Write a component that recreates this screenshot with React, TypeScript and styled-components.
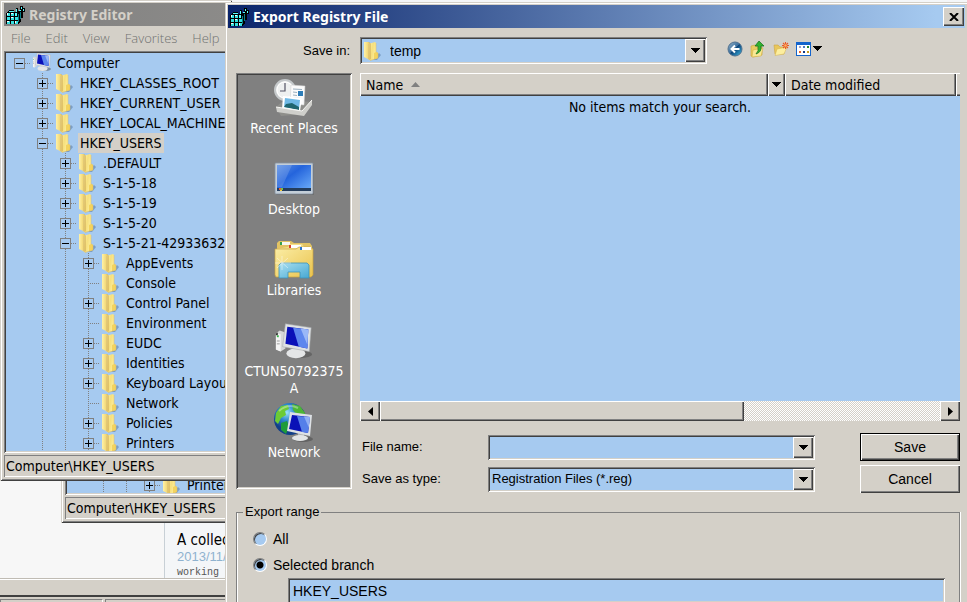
import React from 'react';
import styled, { createGlobalStyle, css } from 'styled-components';

const FACE = '#d4d0c8';
const BLUE = '#a6caf0';
const SHADOW = '#808080';
const DARK = '#404040';
const UI = '"DejaVu Sans Condensed", "Noto Sans", sans-serif';
const ARIAL = '"Liberation Sans", Arial, sans-serif';

const Global = createGlobalStyle`
  * { box-sizing: border-box; }
  body { margin: 0; background: #f7f7f7; color: #000; font: 14px/20px ${UI}; }
  button, input, select { font: inherit; color: inherit; margin: 0; padding: 0; border: 0; border-radius: 0; }
`;

const raised = css`
  background: ${FACE};
  box-shadow: inset 1px 1px #fff, inset -1px -1px ${DARK}, inset -2px -2px ${SHADOW};
`;
const frame = css`
  background: ${FACE};
  box-shadow: inset 1px 1px ${FACE}, inset -1px -1px ${DARK}, inset 2px 2px #fff, inset -2px -2px ${SHADOW};
`;
const sunken = css`
  padding: 2px;
  box-shadow: inset 1px 1px ${SHADOW}, inset -1px -1px #fff, inset 2px 2px ${DARK}, inset -2px -2px ${FACE};
`;

const Screen = styled.div`
  position: relative;
  height: 100vh;
  overflow: hidden;
`;

/* ---------- page behind the windows ---------- */
const Backdrop = styled.div`
  height: 100%;
  display: flex;
  flex-direction: column;
`;
const BackPage = styled.div`
  flex: 1;
  min-height: 0;
  display: flex;
  align-items: flex-end;
`;
const BackArticle = styled.article`
  margin-left: 164px;
  flex: 1;
  height: 100%;
  padding: 530px 0 0 12px;
  overflow: hidden;
  border-left: 1px solid #c8d0d6;
  background: #f4f6f8;
`;
const BackTitle = styled.h2`
  margin: 0;
  font: 15px/20px ${UI};
`;
const BackDate = styled.time`
  display: block;
  font: 13px/14px ${ARIAL};
  color: #8fb2cf;
`;
const BackCode = styled.p`
  margin: 4px 0 0;
  font: 10px/10px "Liberation Mono", monospace;
  color: #555;
`;
const BackBar = styled.div`
  height: 19px;
  background: ${FACE};
  border-top: 1px solid #c0bcb4;
  border-bottom: 2px solid ${DARK};
  box-shadow: inset 0 1px #fff;
`;
const BackStatus = styled.div`
  display: flex;
  gap: 2px;
  height: 5px;
  padding-top: 2px;
  background: ${FACE};
`;
const BackCell = styled.div<{ $grow?: boolean }>`
  flex: ${p => (p.$grow ? '1' : '0 0 103px')};
  border-top: 1px solid ${SHADOW};
  border-left: 1px solid ${SHADOW};
  border-right: 1px solid #fff;
`;

/* ---------- windows ---------- */
const EditorWindow = styled.section`
  position: absolute;
  top: 0;
  left: 0;
  width: 24%;
  padding: 3px 0 4px 4px;
  ${frame}
`;
const LowerWindow = styled.section`
  position: absolute;
  top: 469px;
  left: 61px;
  width: 20%;
  padding: 4px 0 4px 4px;
  ${frame}
`;
const DialogWindow = styled.section`
  position: absolute;
  top: 2px;
  left: 225px;
  right: 0;
  bottom: 0;
  padding: 3px 2px 0 3px;
  overflow: hidden;
  background: ${FACE};
  box-shadow: inset 1px 1px ${FACE}, inset 2px 2px #fff;
`;
const TitleBar = styled.header<{ $active?: boolean }>`
  display: flex;
  align-items: center;
  gap: 3px;
  height: 23px;
  padding: 0 1px 0 2px;
  background: ${p => (p.$active ? `linear-gradient(90deg, #0a246a, ${BLUE} 96%)` : 'linear-gradient(90deg, #808080, #8c8b89)')};
  color: ${p => (p.$active ? '#fff' : FACE)};
`;
const TitleText = styled.h1`
  flex: 1;
  margin: 0;
  white-space: nowrap;
  font: bold 14px/22px "Noto Sans", sans-serif;
`;
const CloseButton = styled.button`
  display: grid;
  place-items: center;
  width: 21px;
  height: 19px;
  ${raised}
`;

const Menu = styled.nav`
  display: flex;
  gap: 15px;
  height: 25px;
  padding-left: 7px;
  font: 300 13px/23px "Open Sans", sans-serif;
`;
const MenuButton = styled.button`
  background: none;
  color: #707070;
`;

const TreePane = styled.div<{ $short?: boolean }>`
  ${sunken}
  height: ${p => (p.$short ? '22px' : '402px')};
  overflow: hidden;
  background: ${BLUE};
`;
const TreeList = styled.ul`
  margin: 0;
  padding: 0 0 0 2px;
  height: 100%;
  overflow: hidden;
  list-style: none;
`;
const TreeRow = styled.li`
  display: flex;
  align-items: center;
  height: 20px;
  white-space: nowrap;
`;
const dotsV = `repeating-linear-gradient(${SHADOW} 0 1px, transparent 1px 2px)`;
const dotsH = `repeating-linear-gradient(90deg, ${SHADOW} 0 1px, transparent 1px 2px)`;
const Guide = styled.span<{ $line?: boolean; $branch?: boolean }>`
  flex: none;
  display: grid;
  place-items: center;
  width: 23px;
  height: 20px;
  background-repeat: no-repeat;
  ${p => p.$line && !p.$branch && css`background-image: ${dotsV}; background-size: 1px 100%; background-position: 11px 0;`}
  ${p => !p.$line && p.$branch && css`background-image: ${dotsH}; background-size: 12px 1px; background-position: 11px 10px;`}
  ${p => p.$line && p.$branch && css`background-image: ${dotsV}, ${dotsH}; background-size: 1px 100%, 12px 1px; background-position: 11px 0, 11px 10px;`}
`;
const Expander = styled.button`
  display: block;
  width: 11px;
  height: 11px;
  border: 1px solid ${SHADOW};
  background: ${BLUE};
  svg { display: block; }
`;
const IconSlot = styled.span`
  flex: none;
  width: 20px;
  height: 20px;
  margin: 0 2px;
  svg { display: block; }
`;
const TreeLabel = styled.span<{ $selected?: boolean }>`
  padding: 0 2px;
  background: ${p => (p.$selected ? FACE : 'transparent')};
`;
const Status = styled.footer`
  height: 22px;
  margin-top: 2px;
  padding: 1px 2px 0;
  box-shadow: inset 1px 1px ${SHADOW}, inset -1px -1px #fff;
`;

/* ---------- dialog ---------- */
const Body = styled.div`
  display: flex;
  flex-direction: column;
  padding: 9px 5px 0 8px;
  font-family: ${ARIAL};
`;
const TopRow = styled.div`
  display: flex;
  align-items: center;
  gap: 8px;
`;
const SaveInLabel = styled.label`
  flex: none;
  width: 116px;
  padding-right: 2px;
  font-size: 13px;
  text-align: right;
`;
const Combo = styled.div<{ $wide?: boolean }>`
  flex: ${p => (p.$wide ? '1' : '0 1 347px')};
  display: flex;
  align-items: center;
  min-width: 0;
  height: ${p => (p.$wide ? '25px' : '27px')};
  ${sunken}
  background: ${BLUE};
`;
const Pick = styled.select<{ $small?: boolean }>`
  flex: 1;
  min-width: 0;
  height: 100%;
  padding-left: ${p => (p.$small ? '2px' : '4px')};
  appearance: none;
  background: transparent;
  outline: 0;
  ${p => p.$small && css`font-size: 13px;`}
`;
const Field = styled.input`
  flex: 1;
  min-width: 0;
  height: 100%;
  padding-left: 3px;
  background: ${BLUE};
  outline: 0;
`;
const Drop = styled.button`
  display: grid;
  place-items: center;
  width: 20px;
  height: 100%;
  ${raised}
`;
const Tools = styled.div`
  display: flex;
  gap: 5px;
  padding: 0 0 4px 12px;
`;
const ToolButton = styled.button`
  display: flex;
  align-items: center;
  height: 20px;
  background: none;
`;
const Main = styled.div`
  display: flex;
  gap: 8px;
  margin-top: 9px;
`;
const Places = styled.nav`
  flex: none;
  width: 116px;
  height: 416px;
  ${sunken}
  background: ${SHADOW};
  font-family: ${UI};
`;
const Place = styled.button`
  display: flex;
  flex-direction: column;
  align-items: center;
  width: 100%;
  height: 81px;
  padding: 3px 6px 0;
  background: none;
  color: #fff;
  line-height: 17px;
  overflow-wrap: anywhere;
  svg { flex: none; margin-bottom: 2px; }
`;
const Right = styled.div`
  flex: 1;
  min-width: 0;
`;
const ListPane = styled.div`
  display: flex;
  flex-direction: column;
  height: 348px;
  background: ${BLUE};
  font-family: ${UI};
`;
const Files = styled.table`
  width: 100%;
  table-layout: fixed;
  border-collapse: collapse;
`;
const Head = styled.th<{ $w?: number }>`
  width: ${p => (p.$w ? `${p.$w}px` : 'auto')};
  height: 23px;
  padding: 0 0 0 6px;
  overflow: hidden;
  text-align: left;
  font-weight: normal;
  ${raised}
  svg { margin-left: 4px; vertical-align: 3px; }
`;
const HeadArrow = styled(Head)`
  padding: 0;
  svg { display: block; margin: 0 auto; }
`;
const HeadEnd = styled(Head)`
  padding: 0;
  box-shadow: inset 1px 1px #fff, inset 0 -1px ${DARK}, inset 0 -2px ${SHADOW};
`;
const EmptyCell = styled.td`
  padding: 1px 0;
  text-align: center;
`;
const Scroll = styled.div`
  display: flex;
  margin-top: auto;
  height: 20px;
  background: repeating-conic-gradient(#fff 0 25%, ${FACE} 0 50%) 0 0 / 2px 2px;
`;
const ScrollButton = styled.button`
  display: grid;
  place-items: center;
  width: 20px;
  ${raised}
`;
const Thumb = styled.div`
  flex: 65;
  ${raised}
`;
const Track = styled.div`
  flex: 35;
`;
const Form = styled.div`
  display: grid;
  grid-template-columns: 120px minmax(0, 327px) 1fr 100px;
  column-gap: 8px;
  row-gap: 4px;
  align-items: center;
  margin-top: 12px;
`;
const FormLabel = styled.label`
  padding-left: 2px;
  font-size: 13px;
`;
const Push = styled.button<{ $default?: boolean }>`
  grid-column: 4;
  height: 28px;
  ${raised}
  ${p => p.$default && css`border: 1px solid #000;`}
`;
const Group = styled.fieldset`
  min-width: 0;
  height: 120px;
  margin: 9px 0 0;
  padding: 4px 14px 0 16px;
  border: 1px solid ${SHADOW};
  box-shadow: inset 1px 0 #fff, 1px 0 #fff;
`;
const Legend = styled.legend`
  margin-left: -10px;
  padding: 0 2px;
  font-size: 13px;
`;
const Option = styled.label`
  display: flex;
  align-items: center;
  gap: 6px;
  height: 26px;
`;
const Radio = styled.input`
  appearance: none;
  width: 14px;
  height: 14px;
  border: 1px solid;
  border-color: ${SHADOW} #fff #fff ${SHADOW};
  border-radius: 50%;
  background: ${BLUE};
  box-shadow: inset 1px 1px ${DARK};
  &:checked { background: radial-gradient(circle, #000 0 3px, ${BLUE} 4px); }
`;
const Branch = styled.div`
  ${sunken}
  display: flex;
  height: 25px;
  margin-left: 35px;
  background: ${BLUE};
`;

/* ---------- icons ---------- */
const Down = () => (
  <svg width="9" height="5" viewBox="0 0 9 5" shapeRendering="crispEdges"><path d="M0 0H9L5 5H4Z" /></svg>
);
const Sort = () => (
  <svg width="9" height="5" viewBox="0 0 9 5"><path d="M4.500 0L9 5H0Z" fill="#808080" /></svg>
);
const Side = ({ right }: { right?: boolean }) => (
  <svg width="5" height="9" viewBox="0 0 5 9"><path d={right ? 'M0 0L5 4.500L0 9Z' : 'M5 0L0 4.500L5 9Z'} /></svg>
);
const Close = () => (
  <svg width="10" height="8" viewBox="0 0 10 8"><path d="M1 0L9 8M9 0L1 8" stroke="#000" strokeWidth="2" /></svg>
);

const RegIcon = () => (
  <svg width="20" height="20" viewBox="0 0 20 20" shapeRendering="crispEdges" aria-hidden="true">
    <path d="M0 8L3 5H8V7H10V3H12V6H14V1H17V3H19V7H17V13H15V16L12 19H0Z" fill="#000" />
    <path d="M1 8h3v3H1zM5 8h3v3H5zM1 12h3v3H1zM5 12h3v3H5zM9 12h3v3H9zM1 16h3v3H1zM5 16h3v3H5zM9 16h3v3H9z" fill="#35e0e0" />
    <path d="M3 6h5v1H3zM10 4h1v3h-1zM15 2h1v2h-1zM13 5h2v1h-2zM17 4h1v2h-1zM9 8h2v3H9z" fill="#57ffff" />
    <path d="M12 9h1v8h-1zM14 7h1v7h-1z" fill="#087f87" />
    <path d="M1 8h1v2H1zM5 12h2v1H5zM1 16h2v1H1zM9 16h1v2H9zM5 8h2v1H5z" fill="#fff" />
  </svg>
);

const FolderIcon = () => (
  <svg width="20" height="20" viewBox="0 0 20 20" aria-hidden="true">
    <defs>
      <linearGradient id="fCover" x1="0" x2="1" y2=".3"><stop stopColor="#fff7b4" /><stop offset=".5" stopColor="#f6df7c" /><stop offset="1" stopColor="#fff2a4" /></linearGradient>
      <linearGradient id="fIn" x2="1"><stop stopColor="#fff2a8" /><stop offset=".6" stopColor="#f2d774" /><stop offset="1" stopColor="#b58a30" /></linearGradient>
    </defs>
    <path d="M9 19L15 12L17 14L13 19Z" fill="#50719b" opacity=".5" />
    <path d="M0 1H5L7 3V17L4 18L0 16Z" fill="url(#fIn)" />
    <path d="M4 3L11 1L12 2V11L14 12V17L6 19.500L4 18Z" fill="url(#fCover)" />
    <path d="M4 3L7 2.500V18L5.500 19L4 18Z" fill="#cda850" opacity=".55" />
    <path d="M10 12L12 11L14 12V17L10 18.300Z" fill="#f3d35e" />
    <path d="M12 2V11L14 12V17L6 19.500" stroke="#dcb95c" strokeWidth=".5" fill="none" />
  </svg>
);

const PcShape = () => (
  <g>
    <path d="M2 10L6 7L12 9V26L7 29L2 27Z" fill="#d6d8d8" />
    <path d="M2 10L7 11V29L2 27Z" fill="#f5f5f5" />
    <path d="M2 10L4 9V12H2Z" fill="#333" />
    <path d="M3 12h2v2H3z" fill="#39b54a" />
    <path d="M3 18h3M3 21h3" stroke="#999" />
    <ellipse cx="27" cy="32" rx="13" ry="4" fill="#444" opacity=".45" />
    <path d="M20 25L28 27L29 31H19Z" fill="#b5b8ba" />
    <ellipse cx="23" cy="31" rx="10" ry="5" fill="#e4e6e7" />
    <path d="M12 0L39 4L37 29L9 24Z" fill="#dfe2e4" stroke="#a7abad" strokeWidth=".6" />
    <path d="M14 3L36 6L35 26L12 21Z" fill="#0a10b8" />
    <path d="M20 4L36 6L35 26L26 24Z" fill="#5d86ee" />
    <path d="M28 5L36 6L35 22Z" fill="#b5cdfc" opacity=".7" />
  </g>
);
const ComputerSmall = () => (
  <svg width="20" height="18" viewBox="4 0 40 36" aria-hidden="true"><PcShape /></svg>
);
const ComputerLarge = () => (
  <svg width="40" height="40" viewBox="0 -3 42 42" aria-hidden="true"><PcShape /></svg>
);
const RecentIcon = () => (
  <svg width="40" height="40" viewBox="0 0 40 40" aria-hidden="true">
    <path d="M2 29L10 22L38 24L31 36L7 38Z" fill="#8f8f8b" />
    <circle cx="11" cy="12" r="10" fill="#eef0f0" stroke="#c4c8ca" strokeWidth="2" />
    <circle cx="11" cy="12" r="8" fill="none" stroke="#fff" />
    <path d="M11 5V13H6" fill="none" stroke="#556" strokeWidth="1.200" />
    <path d="M17 7L31 8L30 27L16 26Z" fill="#fbfbfb" stroke="#ccc" strokeWidth=".5" />
    <path d="M19 11L28 11.500M19 14L23 14.500M19 17L23 17.500M19 20L28 20.500" stroke="#9bb0c0" />
    <path d="M24 13h5v5h-5z" fill="#2d7db8" />
    <path d="M9 18L28 20L26 33L8 31Z" fill="#fff" />
    <path d="M11 20L26 22L25 31L10 29Z" fill="#6fb9e6" />
    <path d="M10 29L12 26L18 25L25 29V32Z" fill="#1f6670" />
    <path d="M2 29L28 33L38 22V27L30 38L3 34Z" fill="#cfcfcb" />
    <path d="M2 29L28 33L38 22" fill="none" stroke="#f7f7f5" />
  </svg>
);
const DesktopIcon = () => (
  <svg width="40" height="40" viewBox="0 0 40 40" aria-hidden="true">
    <defs><linearGradient id="dk" x2="1" y2="1"><stop stopColor="#5c90e4" /><stop offset=".4" stopColor="#2464dc" /><stop offset="1" stopColor="#6fb0fb" /></linearGradient></defs>
    <rect x="2" y="5" width="38" height="31" rx="1" fill="#555" opacity=".5" />
    <rect x="1" y="4" width="38" height="31" rx="1" fill="#c3ced8" stroke="#8593a1" strokeWidth=".8" />
    <rect x="3" y="6" width="34" height="26" fill="url(#dk)" />
    <path d="M3 6H18L8 28H3Z" fill="#fff" opacity=".15" />
    <rect x="3" y="29" width="34" height="3" fill="#243d5c" />
    <path d="M5 29h2v2H5z" fill="#e36133" /><path d="M7 29h2v2H7z" fill="#7cbd42" /><path d="M6 31h2v1H6z" fill="#f4cd3c" />
  </svg>
);
const LibrariesIcon = () => (
  <svg width="40" height="40" viewBox="0 0 40 40" aria-hidden="true">
    <defs>
      <linearGradient id="lb" x2="1" y2="1"><stop stopColor="#fbeea7" /><stop offset="1" stopColor="#eac34d" /></linearGradient>
      <linearGradient id="lg" y2="1"><stop stopColor="#a9dff0" /><stop offset="1" stopColor="#47a8d3" /></linearGradient>
    </defs>
    <path d="M3 3L5 1H17L20 3H36L38 6V20H3Z" fill="#e2c363" />
    <path d="M6 2h10v3H6z" fill="#f7f7ef" /><path d="M6 2h2v3H6z" fill="#35a14c" />
    <path d="M2 9L14 7L16 4H28L30 7H38V20H2Z" fill="#f3df8a" />
    <path d="M15 5h12v3H15z" fill="#fff" /><path d="M15 5h2v3h-2z" fill="#d9412e" />
    <path d="M1 9L22 9L25 7H36L39 9V35L37 37H2L1 35Z" fill="url(#lb)" stroke="#caa341" strokeWidth=".7" />
    <path d="M26 7h11v3H26z" fill="#fff" /><path d="M26 7h2v3h-2z" fill="#2874c8" />
    <path d="M5 25L7 23H33L35 25V38H26V32H14V38H5Z" fill="url(#lg)" stroke="#3d93b8" strokeWidth=".8" />
    <path d="M8 16V30M1 23H17M3 18L14 28M14 18L3 28" stroke="#fff" strokeWidth=".6" opacity=".75" />
  </svg>
);
const NetworkIcon = () => (
  <svg width="40" height="40" viewBox="0 0 40 40" aria-hidden="true">
    <defs><radialGradient id="gl" cx=".4" cy=".3"><stop stopColor="#9ee5fa" /><stop offset=".5" stopColor="#2d87cf" /><stop offset="1" stopColor="#123f88" /></radialGradient></defs>
    <circle cx="16" cy="17" r="16" fill="url(#gl)" />
    <path d="M2 11L7 4L14 3L15 7L11 9L12 13L7 16L4 22L1 19Z" fill="#6ccb35" />
    <path d="M18 2L26 4L31 11L31 16L23 13L19 8Z" fill="#4cb636" />
    <path d="M7 21L13 19L15 25L12 32L7 28Z" fill="#1e9b38" />
    <path d="M5 9Q14 1 24 6" stroke="#fff" fill="none" opacity=".35" strokeWidth="2" />
    <ellipse cx="29" cy="37" rx="10" ry="3" fill="#444" opacity=".5" />
    <path d="M24 29h6v6h-6z" fill="#b4b7b9" />
    <ellipse cx="26" cy="36" rx="8" ry="3" fill="#e3e5e6" />
    <path d="M16 10L38 13L36 34L13 29Z" fill="#dde1e5" />
    <path d="M18 13L36 15L34 31L15 27Z" fill="#0a12b7" />
    <path d="M23 14L36 15L34 31L28 30Z" fill="#557fe9" />
    <path d="M30 14.500L36 15L35 26Z" fill="#b5cdfc" opacity=".6" />
  </svg>
);
const BackIcon = () => (
  <svg width="18" height="18" viewBox="0 0 18 18" aria-hidden="true">
    <defs><linearGradient id="bk" y2="1"><stop stopColor="#9cb7cb" /><stop offset=".48" stopColor="#346b9c" /><stop offset=".5" stopColor="#0d4479" /><stop offset="1" stopColor="#3fc0ea" /></linearGradient></defs>
    <circle cx="8" cy="9" r="7" fill="url(#bk)" stroke="#50708f" />
    <path d="M12.500 9H5M8 5.500L4.500 9L8 12.500" stroke="#fff" strokeWidth="2" fill="none" />
  </svg>
);
const UpIcon = () => (
  <svg width="18" height="18" viewBox="0 0 18 18" aria-hidden="true">
    <path d="M1 6L5 5L7 7L12 7V15L3 17L1 16Z" fill="#e8cc62" stroke="#c6a23b" strokeWidth=".6" />
    <path d="M3 10L13 8L11 16L2 17Z" fill="#f8e995" stroke="#d0ab40" strokeWidth=".5" />
    <path d="M6 14Q9 11 8 6H5L9 1L14 6H11Q12 12 6 14Z" fill="#31b32f" stroke="#116d18" strokeWidth=".7" />
  </svg>
);
const NewIcon = () => (
  <svg width="18" height="18" viewBox="0 0 18 18" aria-hidden="true">
    <path d="M1 5H5L7 7H11V14H2Z" fill="#e9c75b" stroke="#cba546" strokeWidth=".6" />
    <path d="M4 9L14 7L11 14L2 15.500Z" fill="#fcee9f" stroke="#d5b34f" strokeWidth=".5" />
    <path d="M12.500 2V9M9 5.500H16M10 3L15 8M15 3L10 8" stroke="#ea5a28" strokeWidth="1.100" />
    <circle cx="12.500" cy="5.500" r="1.300" fill="#ffb060" />
  </svg>
);
const ViewIcon = () => (
  <svg width="17" height="14" viewBox="0 0 17 14" shapeRendering="crispEdges" aria-hidden="true">
    <path d="M0 0H15V14H0Z" fill="#1464cc" />
    <path d="M1 3H14V13H1Z" fill="#fff" />
    <path d="M3 4h2v2H3z" fill="#a0a0c8" /><path d="M7 4h2v2H7z" fill="#5078c0" /><path d="M11 4h2v2h-2z" fill="#28882c" />
    <path d="M3 9h2v2H3z" fill="#e8622c" /><path d="M7 9h2v2H7z" fill="#103888" /><path d="M11 9h2v2h-2z" fill="#c89c20" />
  </svg>
);

/* ---------- tree ---------- */
type Mark = '+' | '-' | '';
type Node = { level: number; name: string; mark: Mark; selected?: boolean };

const nodes: Node[] = [
  { level: 0, name: 'Computer', mark: '-' },
  { level: 1, name: 'HKEY_CLASSES_ROOT', mark: '+' },
  { level: 1, name: 'HKEY_CURRENT_USER', mark: '+' },
  { level: 1, name: 'HKEY_LOCAL_MACHINE', mark: '+' },
  { level: 1, name: 'HKEY_USERS', mark: '-', selected: true },
  { level: 2, name: '.DEFAULT', mark: '+' },
  { level: 2, name: 'S-1-5-18', mark: '+' },
  { level: 2, name: 'S-1-5-19', mark: '+' },
  { level: 2, name: 'S-1-5-20', mark: '+' },
  { level: 2, name: 'S-1-5-21-42933632', mark: '-' },
  { level: 3, name: 'AppEvents', mark: '+' },
  { level: 3, name: 'Console', mark: '' },
  { level: 3, name: 'Control Panel', mark: '+' },
  { level: 3, name: 'Environment', mark: '' },
  { level: 3, name: 'EUDC', mark: '+' },
  { level: 3, name: 'Identities', mark: '+' },
  { level: 3, name: 'Keyboard Layou', mark: '+' },
  { level: 3, name: 'Network', mark: '' },
  { level: 3, name: 'Policies', mark: '+' },
  { level: 3, name: 'Printers', mark: '+' },
];

function Row({ node }: { node: Node }) {
  return (
    <TreeRow role="treeitem" aria-level={node.level + 1} aria-selected={!!node.selected}>
      {Array.from({ length: node.level }, (_, i) => <Guide key={i} $line={i > 0} />)}
      <Guide $line={node.level > 0} $branch>
        {node.mark && (
          <Expander aria-label={node.mark === '+' ? 'Expand' : 'Collapse'}>
            <svg width="9" height="9" viewBox="0 0 9 9" shapeRendering="crispEdges">
              <path d={node.mark === '+' ? 'M1 4H8V5H1ZM4 1H5V8H4Z' : 'M1 4H8V5H1Z'} />
            </svg>
          </Expander>
        )}
      </Guide>
      <IconSlot>{node.level === 0 ? <ComputerSmall /> : <FolderIcon />}</IconSlot>
      <TreeLabel $selected={node.selected}>{node.name}</TreeLabel>
    </TreeRow>
  );
}

const places: [string, () => React.JSX.Element][] = [
  ['Recent Places', RecentIcon],
  ['Desktop', DesktopIcon],
  ['Libraries', LibrariesIcon],
  ['CTUN50792375A', ComputerLarge],
  ['Network', NetworkIcon],
];

export default function App() {
  return (
    <Screen>
      <Global />
      <Backdrop>
        <BackPage>
          <BackArticle>
            <BackTitle>A collec</BackTitle>
            <BackDate>2013/11/2</BackDate>
            <BackCode>working</BackCode>
          </BackArticle>
        </BackPage>
        <BackBar />
        <BackStatus><BackCell /><BackCell $grow /></BackStatus>
      </Backdrop>

      <LowerWindow>
        <TreePane $short>
          <TreeList role="tree" aria-label="Keys"><Row node={nodes[nodes.length - 1]} /></TreeList>
        </TreePane>
        <Status>Computer\HKEY_USERS</Status>
      </LowerWindow>

      <EditorWindow>
        <TitleBar><RegIcon /><TitleText>Registry Editor</TitleText></TitleBar>
        <Menu>
          {['File', 'Edit', 'View', 'Favorites', 'Help'].map(m => <MenuButton key={m}>{m}</MenuButton>)}
        </Menu>
        <TreePane>
          <TreeList role="tree" aria-label="Registry">
            {nodes.map(n => <Row key={n.name} node={n} />)}
          </TreeList>
        </TreePane>
        <Status>Computer\HKEY_USERS</Status>
      </EditorWindow>

      <DialogWindow role="dialog" aria-labelledby="dialog-title">
        <TitleBar $active>
          <RegIcon />
          <TitleText id="dialog-title">Export Registry File</TitleText>
          <CloseButton aria-label="Close"><Close /></CloseButton>
        </TitleBar>
        <Body>
          <TopRow>
            <SaveInLabel htmlFor="save-in">Save in:</SaveInLabel>
            <Combo>
              <IconSlot><FolderIcon /></IconSlot>
              <Pick id="save-in"><option>temp</option></Pick>
              <Drop as="span" aria-hidden="true"><Down /></Drop>
            </Combo>
            <Tools>
              <ToolButton aria-label="Back"><BackIcon /></ToolButton>
              <ToolButton aria-label="Up one level"><UpIcon /></ToolButton>
              <ToolButton aria-label="New folder"><NewIcon /></ToolButton>
              <ToolButton aria-label="View"><ViewIcon /><Down /></ToolButton>
            </Tools>
          </TopRow>
          <Main>
            <Places>
              {places.map(([name, Icon]) => <Place key={name}><Icon />{name}</Place>)}
            </Places>
            <Right>
              <ListPane>
                <Files>
                  <thead>
                    <tr>
                      <Head>Name <Sort /></Head>
                      <HeadArrow $w={17} aria-label="Filter"><Down /></HeadArrow>
                      <Head $w={171}>Date modified</Head>
                      <HeadEnd $w={4} aria-label="More" />
                    </tr>
                  </thead>
                  <tbody>
                    <tr><EmptyCell colSpan={4}>No items match your search.</EmptyCell></tr>
                  </tbody>
                </Files>
                <Scroll>
                  <ScrollButton aria-label="Scroll left"><Side /></ScrollButton>
                  <Thumb />
                  <Track />
                  <ScrollButton aria-label="Scroll right"><Side right /></ScrollButton>
                </Scroll>
              </ListPane>
              <Form>
                <FormLabel htmlFor="file-name">File name:</FormLabel>
                <Combo $wide>
                  <Field id="file-name" type="text" />
                  <Drop aria-label="Recent file names"><Down /></Drop>
                </Combo>
                <Push $default>Save</Push>
                <FormLabel htmlFor="save-type">Save as type:</FormLabel>
                <Combo $wide>
                  <Pick $small id="save-type"><option>Registration Files (*.reg)</option></Pick>
                  <Drop as="span" aria-hidden="true"><Down /></Drop>
                </Combo>
                <Push>Cancel</Push>
              </Form>
            </Right>
          </Main>
          <Group>
            <Legend>Export range</Legend>
            <Option><Radio type="radio" name="range" />All</Option>
            <Option><Radio type="radio" name="range" defaultChecked />Selected branch</Option>
            <Branch><Field type="text" aria-label="Selected branch path" defaultValue="HKEY_USERS" /></Branch>
          </Group>
        </Body>
      </DialogWindow>
    </Screen>
  );
}
